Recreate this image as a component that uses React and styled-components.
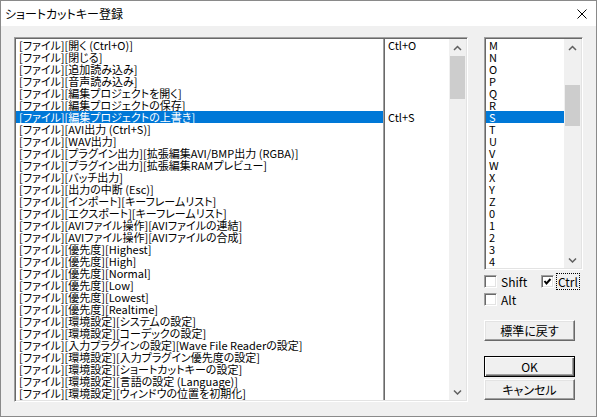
import React from 'react';
import styled, { createGlobalStyle, css } from 'styled-components';

const FONT = `"Noto Sans CJK JP", "Noto Sans", sans-serif`;

const Global = createGlobalStyle`
  html, body { margin: 0; padding: 0; background: #fff; }
  body { font-family: ${FONT}; }
`;

const Window = styled.div`
  width: 597px;
  height: 417px;
  box-sizing: border-box;
  border: 1px solid #8a8a8a;
  background: #f0f0f0;
  display: flex;
  flex-direction: column;
  font-family: ${FONT};
  font-size: 12px;
  color: #000;
  font-feature-settings: "palt";
  overflow: hidden;
`;

const TitleBar = styled.div`
  height: 25px;
  flex: none;
  background: #fff;
  display: flex;
  align-items: center;
  justify-content: space-between;
  padding-left: 4px;
`;

const Title = styled.span`
  font-size: 12px;
  line-height: 25px;
`;

const CloseBtn = styled.div`
  width: 28px;
  height: 25px;
  display: flex;
  align-items: center;
  justify-content: center;
`;

const Body = styled.div`
  flex: 1;
  display: flex;
  align-items: flex-start;
  padding: 11px 0 0 13px;
  gap: 16px;
`;

const sunken = css`
  box-sizing: border-box;
  border: 1px solid;
  border-color: #a0a0a0 #fff #fff #a0a0a0;
  box-shadow: inset 1px 1px #696969, inset -1px -1px #e3e3e3;
  padding: 1px;
  background: #fff;
`;

const ListBox = styled.div`
  ${sunken};
  width: ${(p) => p.$w}px;
  height: ${(p) => p.$h}px;
  display: flex;
  flex: none;
`;

const Column = styled.div`
  width: ${(p) => p.$w}px;
  flex: none;
  display: flex;
  flex-direction: column;
  overflow: hidden;
  box-sizing: border-box;
  ${(p) =>
    p.$divider &&
    css`
      border-left: 1px solid #a0a0a0;
      box-shadow: inset 1px 0 #696969;
      padding-left: 1px;
    `}
`;

const Row = styled.div`
  height: 12px;
  line-height: 12px;
  font-size: 11px;
  padding-left: 3px;
  white-space: nowrap;
  flex: none;
  background: ${(p) => (p.$sel ? '#0078d7' : 'transparent')};
  color: ${(p) => (p.$sel ? '#fff' : '#000')};
`;

const ScrollBar = styled.div`
  width: 17px;
  flex: none;
  background: #f0f0f0;
  display: flex;
  flex-direction: column;
`;

const ArrowBtn = styled.div`
  height: 17px;
  flex: none;
  display: flex;
  align-items: center;
  justify-content: center;
`;

const Track = styled.div`
  flex: 1;
  display: flex;
  flex-direction: column;
`;

const Thumb = styled.div`
  margin: ${(p) => p.$top}px 1px 0 1px;
  height: ${(p) => p.$h}px;
  background: #cdcdcd;
  flex: none;
`;

const RightPanel = styled.div`
  width: 99px;
  display: flex;
  flex-direction: column;
  flex: none;
`;

const Checks = styled.div`
  margin-top: 3px;
  display: grid;
  grid-template-columns: 57px auto;
  grid-auto-rows: 17px;
  row-gap: 1px;
`;

const CheckItem = styled.label`
  display: flex;
  align-items: center;
  gap: 2px;
`;

const CheckBox = styled.span`
  ${sunken};
  width: 13px;
  height: 13px;
  padding: 0;
  display: flex;
  align-items: center;
  justify-content: center;
  flex: none;
`;

const CheckLabel = styled.span`
  border: 1px ${(p) => (p.$focus ? 'dotted #000' : 'solid transparent')};
  padding: 0 1px;
  line-height: 15px;
`;

const Button = styled.div`
  box-sizing: border-box;
  width: 91px;
  height: 21px;
  margin-top: ${(p) => p.$mt}px;
  display: flex;
  align-items: center;
  justify-content: center;
  background: #f0f0f0;
  border: 1px solid;
  border-color: ${(p) => (p.$default ? '#000' : '#fff #696969 #696969 #fff')};
  box-shadow: ${(p) =>
    p.$default
      ? 'inset 1px 1px #fff, inset -1px -1px #696969, inset -2px -2px #a0a0a0'
      : 'inset -1px -1px #a0a0a0, inset 1px 1px #e3e3e3'};
  line-height: 12px;
`;

const Chevron = ({ down }) => (
  <svg width="9" height="6" viewBox="0 0 9 6">
    <polyline
      points={down ? '1,1.5 4.5,5 8,1.5' : '1,5 4.5,1.5 8,5'}
      fill="none"
      stroke="#606060"
      strokeWidth="1.5"
    />
  </svg>
);

const Scroll = ({ top, h }) => (
  <ScrollBar>
    <ArrowBtn>
      <Chevron />
    </ArrowBtn>
    <Track>
      <Thumb $top={top} $h={h} />
    </Track>
    <ArrowBtn>
      <Chevron down />
    </ArrowBtn>
  </ScrollBar>
);

const items = [
  '[ファイル][開く (Ctrl+O)]',
  '[ファイル][閉じる]',
  '[ファイル][追加読み込み]',
  '[ファイル][音声読み込み]',
  '[ファイル][編集プロジェクトを開く]',
  '[ファイル][編集プロジェクトの保存]',
  '[ファイル][編集プロジェクトの上書き]',
  '[ファイル][AVI出力 (Ctrl+S)]',
  '[ファイル][WAV出力]',
  '[ファイル][プラグイン出力][拡張編集AVI/BMP出力 (RGBA)]',
  '[ファイル][プラグイン出力][拡張編集RAMプレビュー]',
  '[ファイル][バッチ出力]',
  '[ファイル][出力の中断 (Esc)]',
  '[ファイル][インポート][キーフレームリスト]',
  '[ファイル][エクスポート][キーフレームリスト]',
  '[ファイル][AVIファイル操作][AVIファイルの連結]',
  '[ファイル][AVIファイル操作][AVIファイルの合成]',
  '[ファイル][優先度][Highest]',
  '[ファイル][優先度][High]',
  '[ファイル][優先度][Normal]',
  '[ファイル][優先度][Low]',
  '[ファイル][優先度][Lowest]',
  '[ファイル][優先度][Realtime]',
  '[ファイル][環境設定][システムの設定]',
  '[ファイル][環境設定][コーデックの設定]',
  '[ファイル][入力プラグインの設定][Wave File Readerの設定]',
  '[ファイル][環境設定][入力プラグイン優先度の設定]',
  '[ファイル][環境設定][ショートカットキーの設定]',
  '[ファイル][環境設定][言語の設定 (Language)]',
  '[ファイル][環境設定][ウィンドウの位置を初期化]',
];

const keys = { 0: 'Ctl+O', 6: 'Ctl+S' };
const letters = ['M', 'N', 'O', 'P', 'Q', 'R', 'S', 'T', 'U', 'V', 'W', 'X', 'Y', 'Z', '0', '1', '2', '3', '4'];

export default function App() {
  return (
    <>
      <Global />
      <Window>
        <TitleBar>
          <Title>ショートカットキー登録</Title>
          <CloseBtn>
            <svg width="10" height="10" viewBox="0 0 10 10">
              <path d="M0.5 0.5 L9.5 9.5 M9.5 0.5 L0.5 9.5" stroke="#000" strokeWidth="1" />
            </svg>
          </CloseBtn>
        </TitleBar>
        <Body>
          <ListBox $w={454} $h={365}>
            <Column $w={367}>
              {items.map((t, i) => (
                <Row key={i} $sel={i === 6}>
                  {t}
                </Row>
              ))}
            </Column>
            <Column $w={66} $divider>
              {items.map((t, i) => (
                <Row key={i}>{keys[i] || ''}</Row>
              ))}
            </Column>
            <Scroll top={0} h={43} />
          </ListBox>
          <RightPanel>
            <ListBox $w={99} $h={233}>
              <Column $w={78}>
                {letters.map((l) => (
                  <Row key={l} $sel={l === 'S'}>
                    {l}
                  </Row>
                ))}
              </Column>
              <Scroll top={29} h={41} />
            </ListBox>
            <Checks>
              <CheckItem>
                <CheckBox />
                <CheckLabel>Shift</CheckLabel>
              </CheckItem>
              <CheckItem>
                <CheckBox>
                  <svg width="9" height="9" viewBox="0 0 9 9">
                    <polyline points="1.5,4 3.5,6.5 7.5,2" fill="none" stroke="#000" strokeWidth="2" />
                  </svg>
                </CheckBox>
                <CheckLabel $focus>Ctrl</CheckLabel>
              </CheckItem>
              <CheckItem>
                <CheckBox />
                <CheckLabel>Alt</CheckLabel>
              </CheckItem>
            </Checks>
            <Button $mt={12}>標準に戻す</Button>
            <Button $mt={15} $default>
              OK
            </Button>
            <Button $mt={2}>キャンセル</Button>
          </RightPanel>
        </Body>
      </Window>
    </>
  );
}
